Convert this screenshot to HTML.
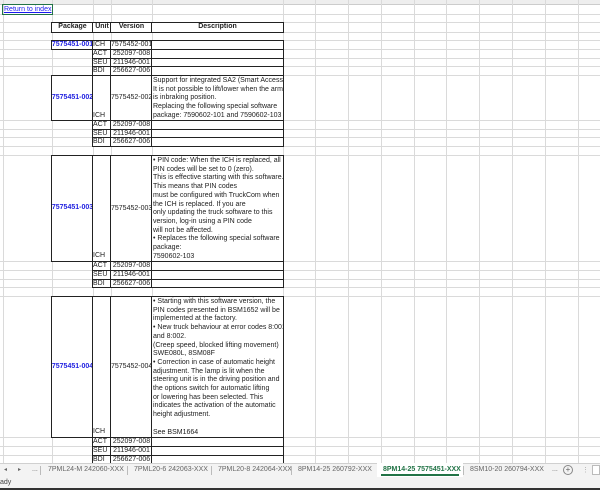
<!DOCTYPE html><html><head><style>
*{margin:0;padding:0;box-sizing:border-box}
body{width:600px;height:490px;overflow:hidden;background:#fff;font-family:"Liberation Sans",Arial,sans-serif;font-size:7px;color:#222;position:relative}
.a{position:absolute}
.h{position:absolute;left:0;width:600px;height:1px;background:#dadada}
.v{position:absolute;top:0;height:464px;width:1px;background:#dadada}
.c{position:absolute;border:1px solid #222;background:#fff;line-height:8.7px;white-space:nowrap;overflow:hidden}
.pk{color:#1f1fe0;font-weight:bold;text-align:center;display:flex;align-items:center;justify-content:center}
.d{padding-left:1px;padding-top:1px}
.tab{position:absolute;top:466px;font-size:7px;color:#666}
.sep{position:absolute;top:466px;width:1px;height:9px;background:#bbb}
</style></head><body>
<div class="a" style="left:0;top:0;width:600px;height:5px;background:#eee;border-bottom:1px solid #ccc"></div>
<div class="v" style="left:3px"></div><div class="v" style="left:52px"></div><div class="v" style="left:93px"></div><div class="v" style="left:111px"></div><div class="v" style="left:152px"></div><div class="v" style="left:283px"></div><div class="v" style="left:315px"></div><div class="v" style="left:348px"></div><div class="v" style="left:381px"></div><div class="v" style="left:414px"></div><div class="v" style="left:446px"></div><div class="v" style="left:479px"></div><div class="v" style="left:512px"></div><div class="v" style="left:545px"></div><div class="v" style="left:578px"></div>
<div class="h" style="top:14px"></div><div class="h" style="top:22px"></div><div class="h" style="top:32px"></div><div class="h" style="top:40px"></div><div class="h" style="top:49px"></div><div class="h" style="top:58px"></div><div class="h" style="top:66px"></div><div class="h" style="top:75px"></div><div class="h" style="top:120px"></div><div class="h" style="top:129px"></div><div class="h" style="top:137px"></div><div class="h" style="top:146px"></div><div class="h" style="top:155px"></div><div class="h" style="top:261px"></div><div class="h" style="top:270px"></div><div class="h" style="top:279px"></div><div class="h" style="top:287px"></div><div class="h" style="top:296px"></div><div class="h" style="top:437px"></div><div class="h" style="top:446px"></div><div class="h" style="top:455px"></div>

<div class="a" style="left:2px;top:4px;width:51px;height:11px;border:1.5px solid #217346"></div>
<div class="a" style="left:4px;top:5px;color:#1a1aee;text-decoration:underline;line-height:9px">Return to index</div>

<!-- header -->
<div class="c" style="left:51px;top:22px;width:43px;height:11px;border-width:1.5px;font-weight:bold;text-align:center;line-height:8px">Package</div>
<div class="c" style="left:92px;top:22px;width:20px;height:11px;border-width:1.5px;font-weight:bold;text-align:center;line-height:8px">Unit</div>
<div class="c" style="left:110px;top:22px;width:43px;height:11px;border-width:1.5px;font-weight:bold;text-align:center;line-height:8px">Version</div>
<div class="c" style="left:151px;top:22px;width:133px;height:11px;border-width:1.5px;font-weight:bold;text-align:center;line-height:8px">Description</div>

<!-- 001 -->
<div class="c pk" style="left:51px;top:40px;width:43px;height:10px;border-width:1.5px">7575451-001</div>
<div class="c" style="left:92px;top:40px;width:20px;height:10px">ICH</div><div class="c" style="left:110px;top:40px;width:43px;height:10px;text-align:center">7575452-001</div><div class="c" style="left:151px;top:40px;width:133px;height:10px"></div>
<div class="c" style="left:92px;top:49px;width:20px;height:10px">ACT</div><div class="c" style="left:110px;top:49px;width:43px;height:10px;text-align:center">252097-008</div><div class="c" style="left:151px;top:49px;width:133px;height:10px"></div>
<div class="c" style="left:92px;top:58px;width:20px;height:9px">SEU</div><div class="c" style="left:110px;top:58px;width:43px;height:9px;text-align:center">211946-001</div><div class="c" style="left:151px;top:58px;width:133px;height:9px"></div>
<div class="c" style="left:92px;top:66px;width:20px;height:10px">BDI</div><div class="c" style="left:110px;top:66px;width:43px;height:10px;text-align:center">256627-006</div><div class="c" style="left:151px;top:66px;width:133px;height:10px"></div>

<!-- 002 -->
<div class="c pk" style="left:51px;top:75px;width:43px;height:46px;border-width:1.5px">7575451-002</div>
<div class="c" style="left:92px;top:75px;width:20px;height:46px;padding-top:36px">ICH</div>
<div class="c" style="left:110px;top:75px;width:43px;height:46px;text-align:center;padding-top:18px">7575452-002</div>
<div class="c d" style="left:151px;top:75px;width:133px;height:46px">Support for integrated SA2 (Smart Access)<br>It is not possible to lift/lower when the arm<br>is inbraking position.<br>Replacing the following special software<br>package: 7590602-101 and 7590602-103</div>
<div class="c" style="left:92px;top:120px;width:20px;height:10px">ACT</div><div class="c" style="left:110px;top:120px;width:43px;height:10px;text-align:center">252097-008</div><div class="c" style="left:151px;top:120px;width:133px;height:10px"></div>
<div class="c" style="left:92px;top:129px;width:20px;height:9px">SEU</div><div class="c" style="left:110px;top:129px;width:43px;height:9px;text-align:center">211946-001</div><div class="c" style="left:151px;top:129px;width:133px;height:9px"></div>
<div class="c" style="left:92px;top:137px;width:20px;height:10px;border-bottom-width:1.5px">BDI</div><div class="c" style="left:110px;top:137px;width:43px;height:10px;text-align:center;border-bottom-width:1.5px">256627-006</div><div class="c" style="left:151px;top:137px;width:133px;height:10px;border-bottom-width:1.5px"></div>

<!-- 003 -->
<div class="c pk" style="left:51px;top:155px;width:43px;height:107px;border-width:1.5px">7575451-003</div>
<div class="c" style="left:92px;top:155px;width:20px;height:107px;padding-top:96px">ICH</div>
<div class="c" style="left:110px;top:155px;width:43px;height:107px;text-align:center;padding-top:49px">7575452-003</div>
<div class="c d" style="left:151px;top:155px;width:133px;height:107px">• PIN code: When the ICH is replaced, all<br>PIN codes will be set to 0 (zero).<br>This is effective starting with this software.<br>This means that PIN codes<br>must be configured with TruckCom when<br>the ICH is replaced. If you are<br>only updating the truck software to this<br>version, log-in using a PIN code<br>will not be affected.<br>• Replaces the following special software<br>package:<br>7590602-103</div>
<div class="c" style="left:92px;top:261px;width:20px;height:10px">ACT</div><div class="c" style="left:110px;top:261px;width:43px;height:10px;text-align:center">252097-008</div><div class="c" style="left:151px;top:261px;width:133px;height:10px"></div>
<div class="c" style="left:92px;top:270px;width:20px;height:10px">SEU</div><div class="c" style="left:110px;top:270px;width:43px;height:10px;text-align:center">211946-001</div><div class="c" style="left:151px;top:270px;width:133px;height:10px"></div>
<div class="c" style="left:92px;top:279px;width:20px;height:9px;border-bottom-width:1.5px">BDI</div><div class="c" style="left:110px;top:279px;width:43px;height:9px;text-align:center;border-bottom-width:1.5px">256627-006</div><div class="c" style="left:151px;top:279px;width:133px;height:9px;border-bottom-width:1.5px"></div>

<!-- 004 -->
<div class="c pk" style="left:51px;top:296px;width:43px;height:142px;border-width:1.5px">7575451-004</div>
<div class="c" style="left:92px;top:296px;width:20px;height:142px;padding-top:131px">ICH</div>
<div class="c" style="left:110px;top:296px;width:43px;height:142px;text-align:center;padding-top:66px">7575452-004</div>
<div class="c d" style="left:151px;top:296px;width:133px;height:142px">• Starting with this software version, the<br>PIN codes presented in BSM1652 will be<br>implemented at the factory.<br>• New truck behaviour at error codes 8:001<br>and 8:002.<br>(Creep speed, blocked lifting movement)<br>SWE080L, 8SM08F<br>• Correction in case of automatic height<br>adjustment. The lamp is lit when the<br>steering unit is in the driving position and<br>the options switch for automatic lifting<br>or lowering has been selected. This<br>indicates the activation of the automatic<br>height adjustment.<br><br>See BSM1664</div>
<div class="c" style="left:92px;top:437px;width:20px;height:10px">ACT</div><div class="c" style="left:110px;top:437px;width:43px;height:10px;text-align:center">252097-008</div><div class="c" style="left:151px;top:437px;width:133px;height:10px"></div>
<div class="c" style="left:92px;top:446px;width:20px;height:10px">SEU</div><div class="c" style="left:110px;top:446px;width:43px;height:10px;text-align:center">211946-001</div><div class="c" style="left:151px;top:446px;width:133px;height:10px"></div>
<div class="c" style="left:92px;top:455px;width:20px;height:9px;border-bottom-width:1.5px">BDI</div><div class="c" style="left:110px;top:455px;width:43px;height:9px;text-align:center;border-bottom-width:1.5px">256627-006</div><div class="c" style="left:151px;top:455px;width:133px;height:9px;border-bottom-width:1.5px"></div>

<!-- tab bar -->
<div class="a" style="left:0;top:463px;width:600px;height:14px;background:#f3f3f3;border-top:1px solid #d0d0d0"></div>
<div class="tab" style="left:4px;font-size:6px">◂</div><div class="tab" style="left:18px;font-size:6px">▸</div><div class="tab" style="left:32px">...</div>
<div class="sep" style="left:40px"></div>
<div class="tab" style="left:48px">7PML24-M 242060-XXX</div>
<div class="sep" style="left:127px"></div>
<div class="tab" style="left:134px">7PML20-6 242063-XXX</div>
<div class="sep" style="left:211px"></div>
<div class="tab" style="left:218px">7PML20-8 242064-XXX</div>
<div class="sep" style="left:291px"></div>
<div class="tab" style="left:298px">8PM14-25 260792-XXX</div>
<div class="a" style="left:377px;top:463px;width:86px;height:14px;background:#fff"></div>
<div class="tab" style="left:383px;color:#217346;font-weight:bold">8PM14-25 7575451-XXX</div>
<div class="a" style="left:381px;top:474px;width:78px;height:2px;background:#217346"></div>
<div class="sep" style="left:463px"></div>
<div class="tab" style="left:470px">8SM10-20 260794-XXX</div>
<div class="tab" style="left:552px">...</div>
<div class="a" style="left:563px;top:465px;width:10px;height:10px;border:1px solid #888;border-radius:50%;font-size:8px;line-height:8px;text-align:center;color:#666">+</div>
<div class="tab" style="left:582px;color:#aaa">⋮</div>
<div class="a" style="left:592px;top:465px;width:8px;height:10px;border:1px solid #bbb;background:#fff"></div>
<!-- status -->
<div class="a" style="left:0;top:477px;width:600px;height:11px;background:#f3f3f3;font-size:7px;color:#444;padding-left:0;line-height:11px">ady</div>
<div class="a" style="left:0;top:488px;width:600px;height:2px;background:#333"></div>
</body></html>
